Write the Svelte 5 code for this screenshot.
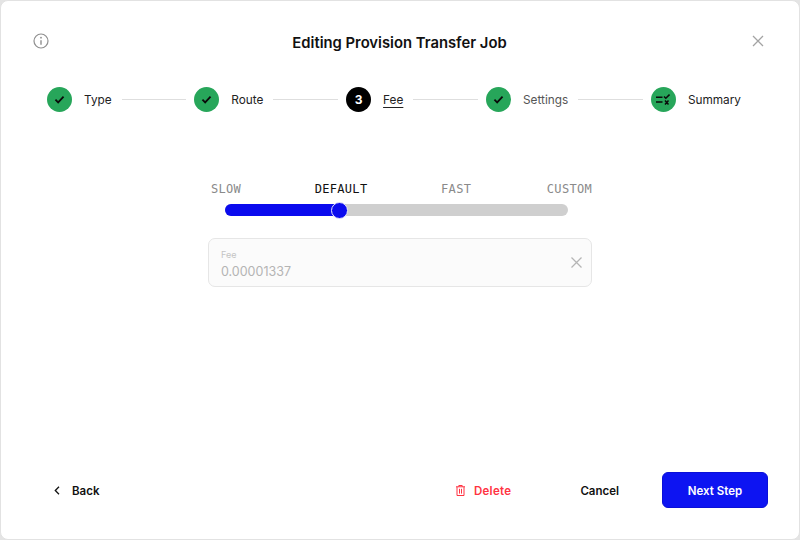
<script>
const steps = [
  { label: "Type", state: "done" },
  { label: "Route", state: "done" },
  { label: "Fee", state: "active", num: 3 },
  { label: "Settings", state: "done", muted: true },
  { label: "Summary", state: "summary" }
];
const speeds = [
  { label: "SLOW" },
  { label: "DEFAULT", on: true },
  { label: "FAST" },
  { label: "CUSTOM" }
];
</script>

<div class="modal">
  <header class="head">
    <svg class="info" width="18" height="18" viewBox="0 0 18 18" fill="none" stroke="#8f8f8f" stroke-width="1.2">
      <circle cx="9" cy="9" r="7" />
      <path d="M9 8.2v4.6" stroke-width="1.4" />
      <circle cx="9" cy="5.7" r=".9" fill="#8f8f8f" stroke="none" />
    </svg>
    <h1>Editing Provision Transfer Job</h1>
    <svg class="close" width="14" height="14" viewBox="0 0 14 14" fill="none" stroke="#a3a3a3" stroke-width="1.3">
      <path d="M2 2l10 10M12 2L2 12" />
    </svg>
  </header>

  <nav class="stepper">
    {#each steps as s, i}
      {#if i > 0}<span class="line"></span>{/if}
      <div class="step">
        <span class="circle" class:black={s.state === "active"}>
          {#if s.state === "done"}
            <svg width="11" height="9" viewBox="0 0 12 10" fill="none" stroke="#0a0a0a" stroke-width="2">
              <path d="M1.5 5.2l3 3 6-6.4" />
            </svg>
          {:else if s.state === "active"}
            {s.num}
          {:else}
            <svg width="14" height="11" viewBox="0 0 14 11" fill="none" stroke="#0a0a0a" stroke-width="1.5">
              <path d="M0 3.200h6.500M0 8h6.500M8 2.500l1.800 1.800L13.500.6M9 6.500l3.500 4M12.500 6.500l-3.500 4" />
            </svg>
          {/if}
        </span>
        <span class="label" class:current={s.state === "active"} class:muted={s.muted}>{s.label}</span>
      </div>
    {/each}
  </nav>

  <section class="fee">
    <div class="speeds">
      {#each speeds as sp}
        <span class:on={sp.on}>{sp.label}</span>
      {/each}
    </div>
    <div class="track">
      <div class="fill"><span class="thumb"></span></div>
    </div>
    <div class="field">
      <div class="field-text">
        <span class="field-label">Fee</span>
        <span class="field-value">0.00001337</span>
      </div>
      <svg width="13" height="13" viewBox="0 0 13 13" fill="none" stroke="#b5b5b5" stroke-width="1.3">
        <path d="M1.5 1.5l10 10M11.5 1.5l-10 10" />
      </svg>
    </div>
  </section>

  <footer class="foot">
    <button class="btn back">
      <svg width="6" height="9" viewBox="0 0 6 9" fill="none" stroke="#111" stroke-width="1.3">
        <path d="M5 .8L1.3 4.5 5 8.2" />
      </svg>
      Back
    </button>
    <div class="actions">
      <button class="btn delete">
        <svg width="9" height="11" viewBox="0 0 9 11" fill="none" stroke="#ff3342" stroke-width="1">
          <path d="M0 1.800h9M2.800 1.800V.5h3.400v1.300M1 1.800v8.700h7V1.800M3.500 3.800v4.800M5.500 3.800v4.800" />
        </svg>
        Delete
      </button>
      <button class="btn cancel">Cancel</button>
      <button class="btn next">Next Step</button>
    </div>
  </footer>
</div>

<style>
:global(body) {
  background: #e4e4e4;
}

.modal {
  box-sizing: border-box;
  width: 800px;
  height: 540px;
  display: flex;
  flex-direction: column;
  background: #fff;
  border: 1px solid #e2e2e2;
  border-radius: 8px;
  font-family: Inter, "Liberation Sans", sans-serif;
  color: #111;
}

.head {
  display: flex;
  align-items: center;
  justify-content: space-between;
  padding: 30px 34px 0 31px;
}

.head h1 {
  margin: 2px 2px 0 0;
  font-size: 14.8px;
  line-height: 20px;
  font-weight: 600;
}

.info {
  margin-top: -2px;
}

.close {
  margin-top: -2px;
}

.stepper {
  display: flex;
  align-items: center;
  padding: 34px 58px 0 46px;
}

.step {
  display: flex;
  align-items: center;
  gap: 12px;
}

.circle {
  width: 25px;
  height: 25px;
  border-radius: 50%;
  background: #27a65a;
  display: flex;
  align-items: center;
  justify-content: center;
  font-size: 12px;
  font-weight: 700;
}

.circle.black {
  background: #000;
  color: #fff;
}

.label {
  font-size: 11.8px;
  line-height: 16px;
  color: #222;
}

.label.muted {
  color: #555;
}

.label.current {
  text-decoration: underline;
  text-underline-offset: 3px;
}

.line {
  flex: 1;
  height: 1px;
  background: #dedede;
  margin: 0 8px 0 10px;
}

.fee {
  width: 384px;
  margin: 69px auto 0;
  box-sizing: border-box;
}

.speeds {
  display: flex;
  justify-content: space-between;
  padding-left: 3px;
  font-family: "DejaVu Sans Mono", "Liberation Mono", monospace;
  font-size: 12px;
  line-height: 16px;
  letter-spacing: .3px;
  color: #8a8a8a;
}

.speeds span:nth-child(3) {
  margin-right: 2px;
}

.speeds .on {
  color: #111;
}

.track {
  height: 12px;
  margin: 7px 24px 0 17px;
  background: #cfcfcf;
  border-radius: 6px;
}

.fill {
  position: relative;
  width: 115px;
  height: 12px;
  background: #0b0bee;
  border-radius: 6px 0 0 6px;
}

.thumb {
  position: absolute;
  right: -8px;
  top: -2px;
  box-sizing: border-box;
  width: 17px;
  height: 17px;
  border-radius: 50%;
  background: #0b0bee;
  border: 1.5px solid #e6e6fa;
}

.field {
  box-sizing: border-box;
  height: 49px;
  margin-top: 22px;
  padding: 0 8px 0 12px;
  display: flex;
  align-items: center;
  justify-content: space-between;
  background: #fbfbfb;
  border: 1px solid #e6e6e6;
  border-radius: 7px;
}

.field-text {
  display: flex;
  flex-direction: column;
  margin-top: 5px;
}

.field-label {
  font-size: 9px;
  line-height: 12px;
  color: #c4c4c4;
}

.field-value {
  margin-top: 2px;
  font-size: 12.5px;
  line-height: 18px;
  color: #b4b4b4;
}

.foot {
  margin-top: auto;
  display: flex;
  align-items: center;
  justify-content: space-between;
  padding: 0 31px 31px 53px;
}

.actions {
  display: flex;
  align-items: center;
}

.btn {
  box-sizing: border-box;
  border: 0;
  background: none;
  padding: 1px 0 0;
  display: inline-flex;
  align-items: center;
  font: 600 11.5px/16px Inter, "Liberation Sans", sans-serif;
  color: #111;
}

.back {
  gap: 12px;
}

.delete {
  gap: 9px;
  color: #ff3342;
  letter-spacing: .3px;
}

.cancel {
  margin-left: 69px;
}

.next {
  margin-left: 43px;
  width: 106px;
  height: 36px;
  justify-content: center;
  background: #0d14f2;
  border: 1px solid #0a10d8;
  color: #fff;
  border-radius: 6px;
}
</style>
